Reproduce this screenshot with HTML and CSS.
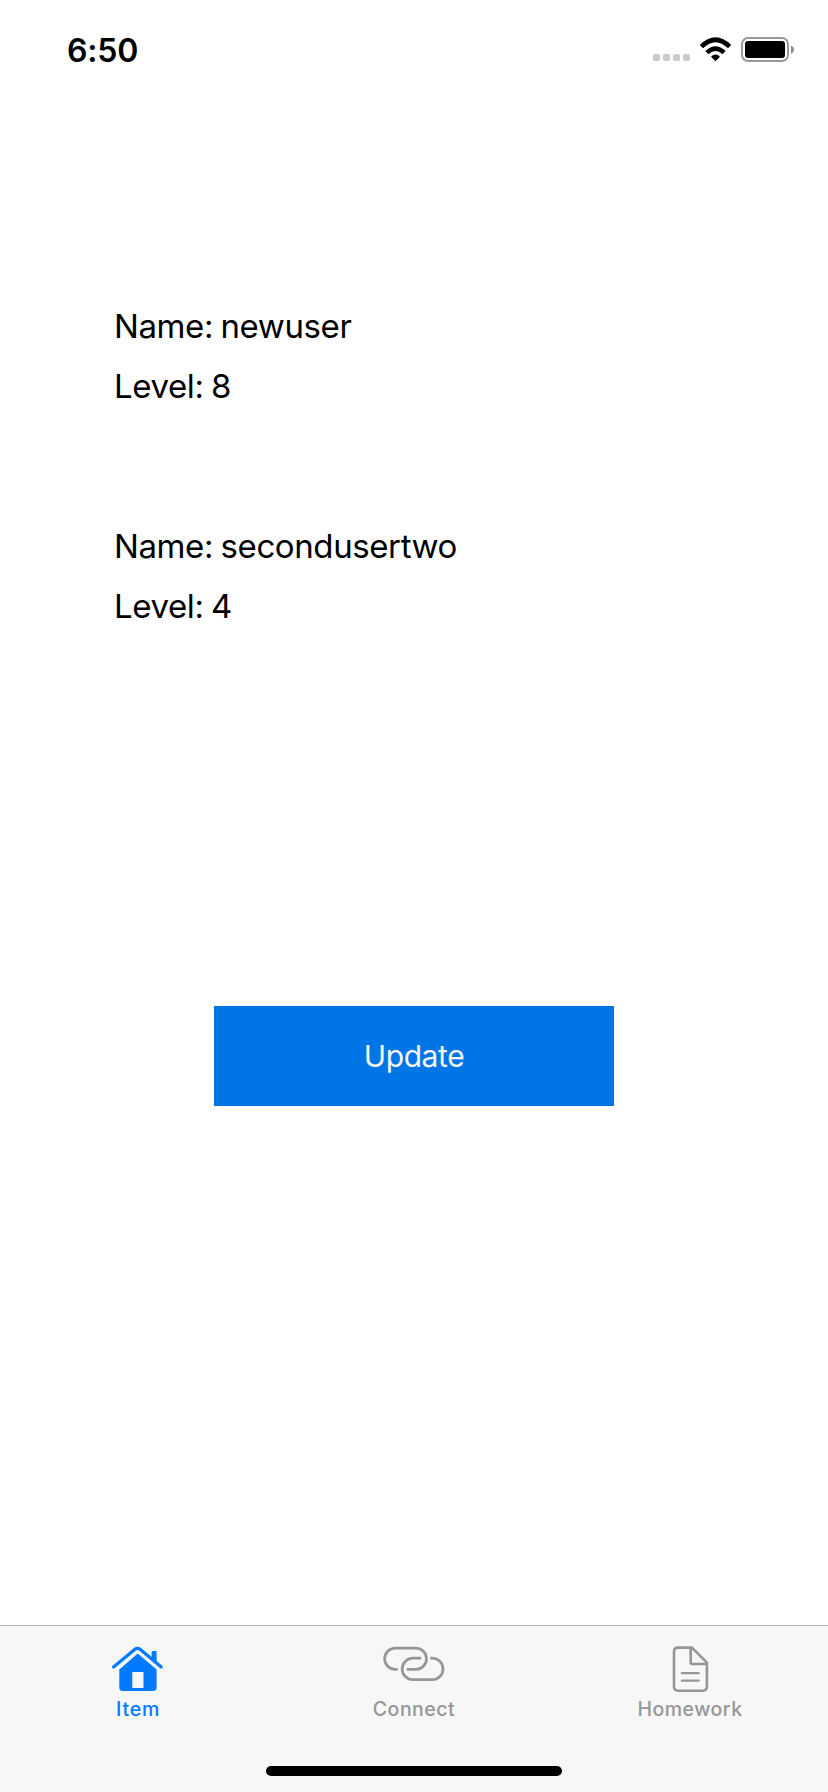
FILE: index.html
```html
<!DOCTYPE html>
<html lang="en">
<head>
<meta charset="utf-8">
<title>Item</title>
<link rel="stylesheet" href="styles.css">
</head>
<body>
<div class="screen">
  <header class="status">
    <span class="time">6:50</span>
    <svg class="signals" width="144" height="28" viewBox="652 35 144 28">
      <g fill="#cbcbcb">
        <rect x="653" y="54" width="7" height="7" rx="1.8"/>
        <rect x="663" y="54" width="7" height="7" rx="1.8"/>
        <rect x="673" y="54" width="7" height="7" rx="1.8"/>
        <rect x="683" y="54" width="7" height="7" rx="1.8"/>
      </g>
      <path d="M715.5 61.2 L711 56.8 Q715.5 52.4 720 56.8 Z"/>
      <g fill="none" stroke="#000" stroke-width="4.7">
        <path d="M706.9 52.6 Q715.5 44.6 724.1 52.6"/>
        <path d="M701.4 46.6 Q715.5 32.8 729.6 46.6"/>
      </g>
      <rect x="742" y="38" width="46" height="23" rx="6" fill="none" stroke="#999" stroke-width="2"/>
      <rect x="745" y="41" width="40" height="17" rx="3"/>
      <path d="M791 45.5 Q794 46.8 794 49.7 T791 54 Z" fill="#8c8c8c"/>
    </svg>
  </header>
  <main class="content">
    <section class="user">
      <p>Name: newuser</p>
      <p>Level: 8</p>
    </section>
    <section class="user">
      <p>Name: secondusertwo</p>
      <p>Level: 4</p>
    </section>
    <button class="update" type="button">Update</button>
  </main>
  <footer class="tabbar">
    <nav class="tabs">
      <a class="tab active">
        <svg width="54" height="50" viewBox="110 1644 54 50">
          <path d="M112.6 1667 L133.9 1649.2 Q136.5 1647.4 139.1 1649.2 L160.2 1667" fill="none" stroke="currentColor" stroke-width="3.2" stroke-linecap="round"/>
          <path d="M150.7 1657.5 V1652 Q150.7 1651 151.7 1651 H154.6 Q155.6 1651 155.6 1652 V1661.8 Z" fill="currentColor"/>
          <path d="M136.7 1653.6 L155.6 1669.5 V1687.5 Q155.6 1691 152.1 1691 H121.8 Q118.3 1691 118.3 1687.5 V1669.5 Z M131.3 1672 V1688 H142.5 V1672 Z" fill="currentColor" fill-rule="evenodd"/>
        </svg>
        <span class="label item">Item</span>
      </a>
      <a class="tab">
        <svg width="64" height="50" viewBox="381.3 1644 64 50" fill="none" stroke="currentColor" stroke-width="2.7">
          <path d="M397 1669.4 H394.5 A10.6 10.6 0 0 1 394.5 1648.2 H415.2 A10.6 10.6 0 0 1 415.2 1669.4 H406"/>
          <path d="M429.5 1658.2 H431.6 A10.75 10.75 0 0 1 431.6 1679.7 H412.2 A10.75 10.75 0 0 1 412.2 1658.2 H420.5"/>
        </svg>
        <span class="label connect">Connect</span>
      </a>
      <a class="tab">
        <svg width="40" height="50" viewBox="669.3 1644 40 50" fill="none" stroke="currentColor" stroke-width="2.6" stroke-linejoin="round" stroke-linecap="round">
          <path d="M677.3 1647.6 H691.2 L706.2 1662.6 V1686.6 Q706.2 1690.7 702.1 1690.7 H677.4 Q673.3 1690.7 673.3 1686.6 V1651.6 Q673.3 1647.6 677.3 1647.6 Z"/>
          <path d="M690 1648.5 V1662.6 Q690 1664 691.4 1664 H705.5"/>
          <path d="M681.2 1673.2 H698 M681.2 1680.7 H698" stroke-width="2.3"/>
        </svg>
        <span class="label homework">Homework</span>
      </a>
    </nav>
    <div class="home-indicator"></div>
  </footer>
</div>
</body>
</html>
```
FILE: styles.css
```css
* {
  box-sizing: border-box;
}

body {
  margin: 0;
  background: #fff;
  color: #000;
  font-family: Inter, "Liberation Sans", sans-serif;
}

.screen {
  display: flex;
  flex-direction: column;
  height: 1792px;
  overflow: hidden;
}

.status {
  display: flex;
  justify-content: space-between;
  height: 88px;
  padding: 35px 32px 0 67px;
}

.signals {
  flex: none;
}

.time {
  font-size: 32px;
  font-weight: 600;
  line-height: 32px;
  letter-spacing: -0.2px;
}

.content {
  display: flex;
  flex: 1;
  flex-direction: column;
  padding: 208px 114px 0;
}

.user {
  height: 220px;
  font-size: 33px;
  line-height: 60px;
  letter-spacing: -0.4px;
  word-spacing: -1.4px;
}

.user p {
  margin: 0;
}

.update {
  width: 400px;
  height: 100px;
  margin: 270px auto 0;
  padding: 0;
  border: 0;
  background: #0076e6;
  color: #f5f5f7;
  font-family: inherit;
  font-size: 30px;
  font-weight: 400;
  letter-spacing: -0.4px;
}

.tabbar {
  height: 167px;
  border-top: 1px solid #b2b2b2;
  background: #f7f7f7;
}

.tabs {
  display: grid;
  grid-template-columns: repeat(3, 1fr);
  height: 140px;
  padding-top: 18px;
}

.tab {
  display: flex;
  flex-direction: column;
  align-items: center;
  color: #969696;
}

.tab.active {
  color: #007aff;
}

.label {
  margin-top: 3px;
  font-size: 19.5px;
  font-weight: 500;
  line-height: 24px;
  letter-spacing: 0.5px;
}

.item {
  letter-spacing: 0.8px;
}

.home-indicator {
  width: 296px;
  height: 10px;
  margin: 0 auto;
  border-radius: 5px;
  background: #000;
}
```
